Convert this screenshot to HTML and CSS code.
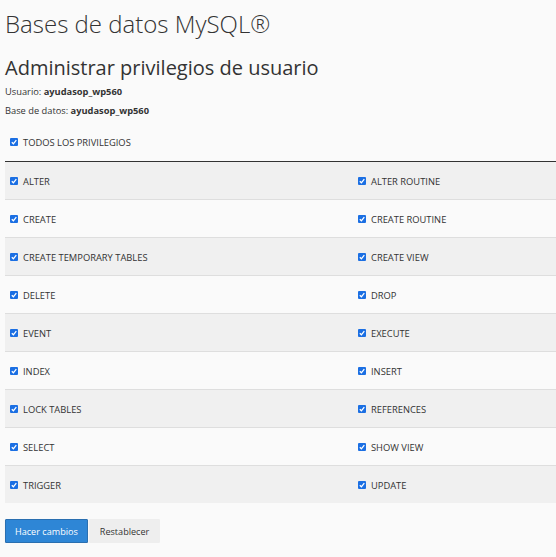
FILE: index.html
```html
<!DOCTYPE html>
<html lang="es">
<head>
<meta charset="utf-8">
<title>Bases de datos MySQL®</title>
<link rel="stylesheet" href="styles.css">
</head>
<body>
<div class="page">
  <h1 class="title">Bases de datos MySQL®</h1>
  <h2 class="subtitle">Administrar privilegios de usuario</h2>
  <p class="meta">Usuario: <b>ayudasop_wp560</b></p>
  <p class="meta">Base de datos: <b>ayudasop_wp560</b></p>

  <label class="all"><span class="cb"><svg viewBox="0 0 8 8"><path d="M1.8 4.2 L3.4 5.8 L6.3 2.2" fill="none" stroke="#fff" stroke-width="1.3"/></svg></span>TODOS LOS PRIVILEGIOS</label>

  <div class="privs">
    <div class="row">
      <label class="cell"><span class="cb"><svg viewBox="0 0 8 8"><path d="M1.8 4.2 L3.4 5.8 L6.3 2.2" fill="none" stroke="#fff" stroke-width="1.3"/></svg></span>ALTER</label>
      <label class="cell"><span class="cb"><svg viewBox="0 0 8 8"><path d="M1.8 4.2 L3.4 5.8 L6.3 2.2" fill="none" stroke="#fff" stroke-width="1.3"/></svg></span>ALTER ROUTINE</label>
    </div>
    <div class="row">
      <label class="cell"><span class="cb"><svg viewBox="0 0 8 8"><path d="M1.8 4.2 L3.4 5.8 L6.3 2.2" fill="none" stroke="#fff" stroke-width="1.3"/></svg></span>CREATE</label>
      <label class="cell"><span class="cb"><svg viewBox="0 0 8 8"><path d="M1.8 4.2 L3.4 5.8 L6.3 2.2" fill="none" stroke="#fff" stroke-width="1.3"/></svg></span>CREATE ROUTINE</label>
    </div>
    <div class="row">
      <label class="cell"><span class="cb"><svg viewBox="0 0 8 8"><path d="M1.8 4.2 L3.4 5.8 L6.3 2.2" fill="none" stroke="#fff" stroke-width="1.3"/></svg></span>CREATE TEMPORARY TABLES</label>
      <label class="cell"><span class="cb"><svg viewBox="0 0 8 8"><path d="M1.8 4.2 L3.4 5.8 L6.3 2.2" fill="none" stroke="#fff" stroke-width="1.3"/></svg></span>CREATE VIEW</label>
    </div>
    <div class="row">
      <label class="cell"><span class="cb"><svg viewBox="0 0 8 8"><path d="M1.8 4.2 L3.4 5.8 L6.3 2.2" fill="none" stroke="#fff" stroke-width="1.3"/></svg></span>DELETE</label>
      <label class="cell"><span class="cb"><svg viewBox="0 0 8 8"><path d="M1.8 4.2 L3.4 5.8 L6.3 2.2" fill="none" stroke="#fff" stroke-width="1.3"/></svg></span>DROP</label>
    </div>
    <div class="row">
      <label class="cell"><span class="cb"><svg viewBox="0 0 8 8"><path d="M1.8 4.2 L3.4 5.8 L6.3 2.2" fill="none" stroke="#fff" stroke-width="1.3"/></svg></span>EVENT</label>
      <label class="cell"><span class="cb"><svg viewBox="0 0 8 8"><path d="M1.8 4.2 L3.4 5.8 L6.3 2.2" fill="none" stroke="#fff" stroke-width="1.3"/></svg></span>EXECUTE</label>
    </div>
    <div class="row">
      <label class="cell"><span class="cb"><svg viewBox="0 0 8 8"><path d="M1.8 4.2 L3.4 5.8 L6.3 2.2" fill="none" stroke="#fff" stroke-width="1.3"/></svg></span>INDEX</label>
      <label class="cell"><span class="cb"><svg viewBox="0 0 8 8"><path d="M1.8 4.2 L3.4 5.8 L6.3 2.2" fill="none" stroke="#fff" stroke-width="1.3"/></svg></span>INSERT</label>
    </div>
    <div class="row">
      <label class="cell"><span class="cb"><svg viewBox="0 0 8 8"><path d="M1.8 4.2 L3.4 5.8 L6.3 2.2" fill="none" stroke="#fff" stroke-width="1.3"/></svg></span>LOCK TABLES</label>
      <label class="cell"><span class="cb"><svg viewBox="0 0 8 8"><path d="M1.8 4.2 L3.4 5.8 L6.3 2.2" fill="none" stroke="#fff" stroke-width="1.3"/></svg></span>REFERENCES</label>
    </div>
    <div class="row">
      <label class="cell"><span class="cb"><svg viewBox="0 0 8 8"><path d="M1.8 4.2 L3.4 5.8 L6.3 2.2" fill="none" stroke="#fff" stroke-width="1.3"/></svg></span>SELECT</label>
      <label class="cell"><span class="cb"><svg viewBox="0 0 8 8"><path d="M1.8 4.2 L3.4 5.8 L6.3 2.2" fill="none" stroke="#fff" stroke-width="1.3"/></svg></span>SHOW VIEW</label>
    </div>
    <div class="row">
      <label class="cell"><span class="cb"><svg viewBox="0 0 8 8"><path d="M1.8 4.2 L3.4 5.8 L6.3 2.2" fill="none" stroke="#fff" stroke-width="1.3"/></svg></span>TRIGGER</label>
      <label class="cell"><span class="cb"><svg viewBox="0 0 8 8"><path d="M1.8 4.2 L3.4 5.8 L6.3 2.2" fill="none" stroke="#fff" stroke-width="1.3"/></svg></span>UPDATE</label>
    </div>
  </div>

  <div class="actions">
    <button class="btn btn-primary" type="button">Hacer cambios</button>
    <button class="btn btn-default" type="button">Restablecer</button>
  </div>
</div>
</body>
</html>
```

FILE: styles.css
```css
html, body {
  margin: 0;
  padding: 0;
  background: #fafafa;
}
body {
  font-family: "Open Sans", "Noto Sans", sans-serif;
  color: #333;
}
.page {
  padding: 0 0 0 5px;
}
.title {
  margin: 7px 0 0 0;
  font-size: 24px;
  line-height: 33px;
  font-weight: 300;
  color: #333;
}
.subtitle {
  margin: 14px 0 0 0;
  font-size: 20px;
  line-height: 28px;
  font-weight: 400;
  color: #333;
}
.meta {
  margin: 0;
  font-size: 9.3px;
  line-height: 19px;
}
.meta b {
  font-weight: 700;
}
.all {
  display: flex;
  align-items: center;
  margin: 12px 0 9px 0;
  padding-left: 5px;
  height: 20px;
  font-size: 9.35px;
}
.cb {
  display: inline-flex;
  width: 8px;
  height: 8px;
  background: #1b6fe3;
  border-radius: 1px;
  margin-right: 5px;
  flex: none;
}
.cb svg {
  width: 8px;
  height: 8px;
  display: block;
}
.privs {
  border-top: 1px solid #333;
}
.row {
  display: grid;
  grid-template-columns: 348px 1fr;
  height: 37px;
  border-bottom: 1px solid #dedede;
}
.row:nth-child(odd) {
  background: #f0f0f0;
}
.row:last-child {
  border-bottom: 0;
}
.cell {
  display: flex;
  align-items: center;
  padding-left: 5px;
  padding-top: 1px;
  font-size: 9.35px;
}
.actions {
  display: flex;
  gap: 1px;
  margin-top: 16px;
}
.btn {
  font-family: "Open Sans", "Noto Sans", sans-serif;
  font-size: 9.1px;
  height: 24px;
  padding: 0 9px;
  border-radius: 1px;
  cursor: pointer;
}
.btn-primary {
  background: #2e86d6;
  border: 1px solid #2a6fb0;
  color: #fff;
  box-shadow: 0 1px 1px rgba(0,0,0,0.15);
}
.btn-default {
  background: #eeeeee;
  border: 1px solid #eeeeee;
  color: #333;
  padding: 0 10px;
}
```
